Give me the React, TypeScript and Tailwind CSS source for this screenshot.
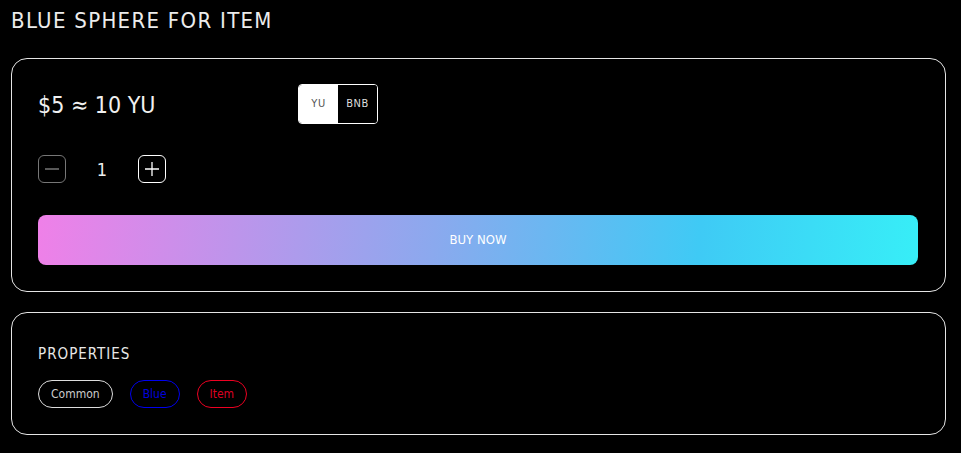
const font = { fontFamily: '"DejaVu Sans Condensed", "DejaVu Sans", Roboto, sans-serif' }

function Chip({ label, cls }: { label: string; cls: string }) {
  return (
    <span className={`h-[28px] px-[12px] flex items-center rounded-full border text-[12px] ${cls}`}>{label}</span>
  )
}

export default function App() {
  return (
    <div className="bg-black min-h-[453px] w-full text-white pl-[11px] pr-[15px] pt-[7px]" style={font}>
      <h1 className="text-[22px] leading-[28px] text-[#ececec] tracking-[1.3px]">BLUE SPHERE FOR ITEM</h1>

      <div className="mt-[23px] border border-[#e5e5e5] rounded-[16px] pl-[26px] pr-[27px] pt-[25px] pb-[26px]">
        <div className="flex items-center h-[40px]">
          <div className="w-[260px] text-[23px] text-[#f0f0f0] pt-[2px]">$5 ≈ 10 YU</div>
          <div className="flex h-[40px] w-[80px] border border-white rounded-[4px] overflow-hidden text-[11px] tracking-[0.5px]">
            <div className="flex-1 bg-white text-[#555] flex items-center justify-center">YU</div>
            <div className="flex-1 bg-black text-[#ddd] flex items-center justify-center">BNB</div>
          </div>
        </div>

        <div className="flex items-center mt-[31px] h-[28px]">
          <button className="w-[28px] h-[28px] rounded-[6px] border border-[#777] flex items-center justify-center">
            <svg width="18" height="18" viewBox="0 0 18 18"><path d="M2 9h14" stroke="#888" strokeWidth="1.3" /></svg>
          </button>
          <span className="w-[72px] text-center text-[18px] text-[#eee]">1</span>
          <button className="w-[28px] h-[28px] rounded-[6px] border border-white flex items-center justify-center">
            <svg width="18" height="18" viewBox="0 0 18 18"><path d="M2 9h14M9 2v14" stroke="#fff" strokeWidth="1.3" /></svg>
          </button>
        </div>

        <button className="mt-[32px] w-full h-[50px] rounded-[8px] bg-[linear-gradient(95deg,#ef80e8_0%,#8ba9ee_45%,#3fcaf5_75%,#37eef7_100%)] text-[13px] text-white">
          BUY NOW
        </button>
      </div>

      <div className="mt-[20px] border border-[#e5e5e5] rounded-[16px] px-[26px] pt-[30px] pb-[26px]">
        <div className="text-[15px] text-[#e8e8e8] tracking-[1px]">PROPERTIES</div>
        <div className="flex gap-[17px] mt-[14px]">
          <Chip label="Common" cls="border-[#ddd] text-[#ccc]" />
          <Chip label="Blue" cls="border-[#0000ee] text-[#0000dd]" />
          <Chip label="Item" cls="border-[#ee0022] text-[#dd0022]" />
        </div>
      </div>
    </div>
  )
}
